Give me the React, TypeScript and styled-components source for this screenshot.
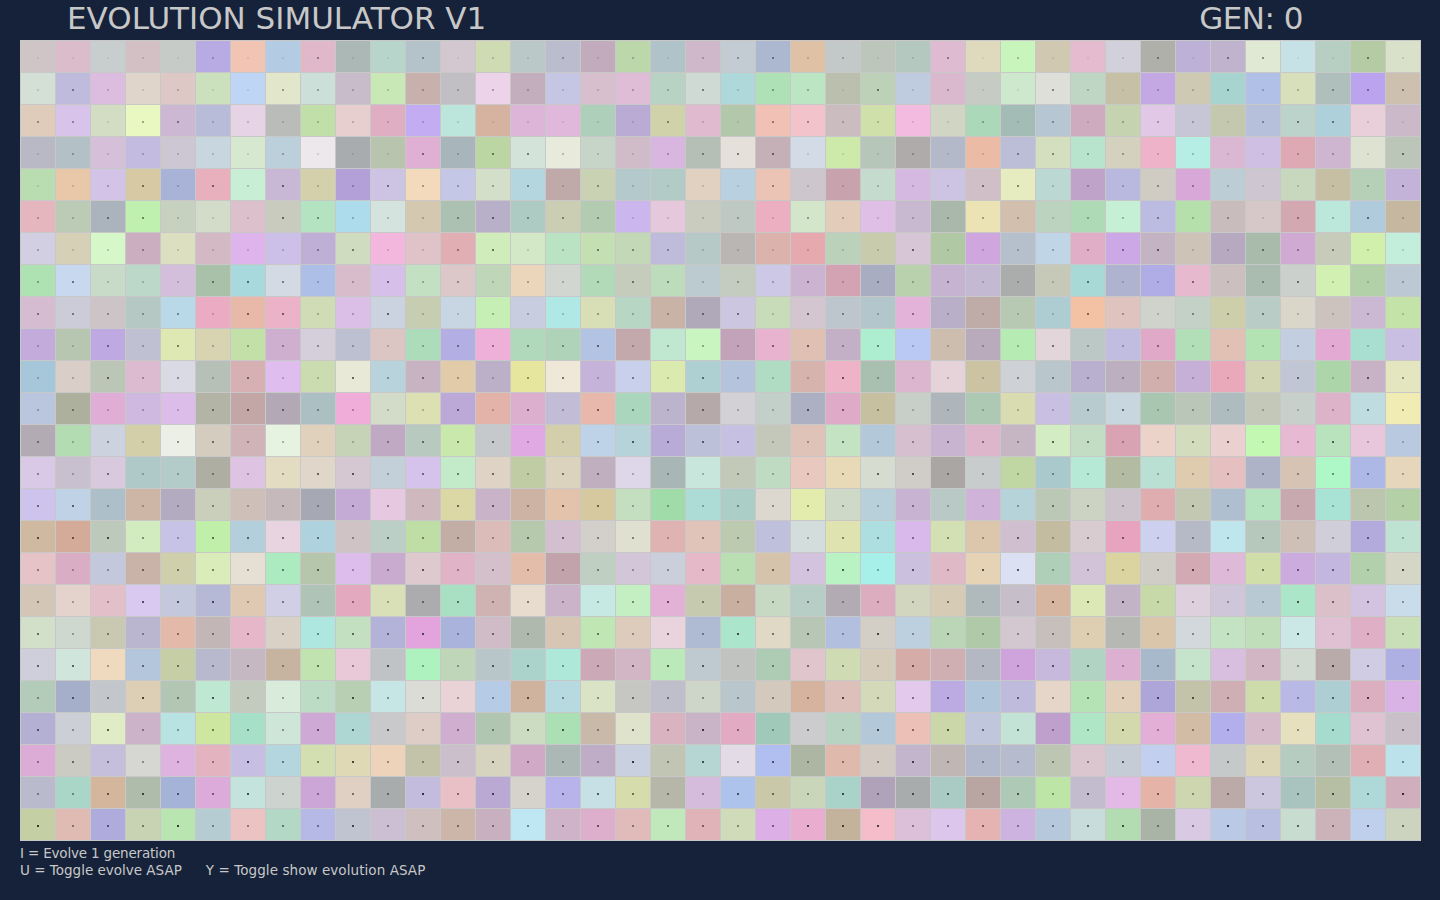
import React from "react";
import styled, { createGlobalStyle } from "styled-components";

const Global = createGlobalStyle`
  html, body { margin: 0; padding: 0; height: 100%; background: #15223a; overflow: hidden; }
`;

const ROWS = [
"cfc4c6 dbbcca c8cdcd d3c0c4 c6cbc8 b8abe3 f1c4b3 b4cbe4 e0b8ca abb8b6 b8d5cb b4c3c9 d3c8cf cfdcb3 bbc8c8 bcbccf c2abbd bcd8ab afc3c9 d0b8cb c4ccd3 abb8cf dfc1a6 c3c9c8 bcc6bb b4c8bf dfbbd1 dfd9bd c8f5bb d0c8b0 e5bbcf d1d0db aeb0a9 bdb1d7 bfb3cd dfe9d3 c6e2e6 b7cfc3 b5cba3 d9e1cb",
"d4dfd6 bfbbdc dcbde0 e0d5cb ddc8c6 cbe0bd bfd5f5 e2e6cb ccdfd8 c8bccb c8e8b6 c8b0ac c1bfc3 edd3ea c3aebd c4c6e3 d8bfcd e0bdd6 b8d3c4 cedad3 afd8db aee2b6 bce6c3 bbbfad bcd1b8 bfcce0 dab8ce c6ccc4 cde8cd dfdfda bfd6c4 c6c0a6 c3a8e3 cec9b3 a8d4d0 b0c0e6 d7dfbb aebfbc bca3f0 cec0ae",
"e0ccbb d8c3ea d3ddc4 e8f8c0 ccb8d3 b9bcd8 e6d3e6 b9bcb9 c0dfa9 e8cfcf dfaec3 c4acf3 bce6dc d5b3a0 dcb5d8 e0b8db aecfb9 b9abd3 d0d3a9 e0bbcf b3c8ab f1c1b6 f3c3cb cbbcbf d0e0ab f3bbe0 d0d6c3 abd8b8 a3bcb6 b6c6d3 cfabbf c6d3b0 e0c8e6 c6c6d6 c3c8ae b6c0db bcd3cb add0db e8cfd9 cbb8c8",
"b9b9c6 b3c0c6 d6bfd8 c4bce0 cdc6d3 c8d6e0 d6e8cf bcd0dc ece8ec a9acae b8c4ad dfb0d3 a8b6bc bbd6a3 d3e3d9 e8eadc c6d5c8 d0bbc8 d8b6e0 b6bfb6 e5e0da c6b0b8 d3dbe6 ceeaab b6c6b8 aeabaa b3b9c9 ebbba6 bbbed6 d3dfbf b8e3cc d5d1bf eeb3c8 b6eee6 dab8d3 cfbfe3 dfa9b3 cfb6d0 dde3d0 bcc6b8",
"b9dcb0 e8c8a9 d3c3e6 d6c9a3 a9b3d8 e8b0bc c8eed6 c8b8d6 d4d0ab b3a0d9 cdc3e3 f3dabc c4c8e6 d3dfc9 b3d6df bfaaa9 c9d3b3 b3c9cc b3cbc6 e0d1c1 b8d0e0 ebc4b6 cdc6cc c8a3ae c4dbcd d6b9e0 cdc3e3 d0bfc6 e6ecc0 bcd8d3 bfa3c9 b9b9e0 d1ccc3 d8a8d8 bccdd6 cec6d0 c8d8bf c6bfa3 b6d0b8 c3b3d8",
"e6b6bf bccbb6 abb3bc bff0af c6d1bf d3dcc8 dcc0cc c9cbbf b3e3c0 addcec d5e3de d5c8b0 adc1b3 b8b0c8 aecbc3 ccceb3 b3cbb0 cbb6ee e6c8dc cbccc0 bfc9c3 ebafc1 d3e6c9 e3ccb9 dfbfe6 c8b9d0 a9b8ab ebe3b3 d3bfae bcd3c0 aedbb6 c6f0d6 bcbce3 b6e0ab c8bcbc d6c8c8 d3a8b0 bce8dc b0cbdc c6b8a0",
"d3cfe3 d6d0b6 d6f8c8 cbafc0 dcdfc0 d3b9c3 dfb3ec ccbfe8 bfafd6 d0dcc0 f3b6dc dfc3c8 e0aeb3 d0ecbb d3e8c6 b9e3c3 c4e0b3 c3d8b6 bfbcdb b6c9c6 bab6b3 dcb3ac e6a9ae bcd1b9 c9cbad d6c6d6 b0c8a3 d0a6de b6bfcc c0d6e6 e0aec6 cca8e6 c3b3c3 cdc3b6 b6a9c0 a9bcac d0aad3 c6ccb9 d0f0ab c3eedb",
"aee2b3 c8d9ef c8dbc8 bcd8c8 d3bfdc a9c1a9 a8d9dc d3dae3 adbfe6 d8bccb d6bfe9 c3e0c3 dcc8c9 c0d6b8 ebd6bc d1d6d0 b3dab8 c6ccbb bcdcbc bccbd0 c4ccc0 cdc8e6 cbb3d1 d3a3b3 a9adc1 b9d1ad c6b3d1 c4b9d3 aaadab c6c8b8 a8d9d6 afb3cf b0ade6 e6b9ce cbbfbf a9bcaf ccd0cc d3f0b3 b3d1a9 bcc8d3",
"d6bcd0 ccccd9 ccc4c6 b6c8c3 b9d9e9 ebabc3 e8b9a9 ecb3c8 d0dcb6 dcbfe6 ccd3e0 c6cdb0 c8d6e3 c6efb6 c8cde0 b0e8e6 d8dfb6 b8d6c4 c9b3a6 afa9b9 ccc6e0 c8dcb9 d3c6d0 bcc6cc b3c6cc e3b3d9 b9afc9 bfaca9 b8c9b3 aecdd3 f3c1a3 dfc3bf d0d3cc c3d1c6 cccfa9 b9cdc6 dad6c9 ccc3bf cbb9d3 c3e3a9",
"c3acdc b6c6b0 bfa9e3 bfc0d1 dde8b3 d8d3b0 c3e0a9 cfafcf d5cfdb bdc0d1 dcc6c3 acdcb9 b3aee3 eeb0d8 b0d9bc aed3b9 b3c3e3 c3a8ac c0e8d0 c8f5c0 c3a3b9 e8b3cf e0c0b3 c4b0c6 aeeed0 b9c9f3 ccbdaf b9aabc b6ebb3 e3d6db bbc8c6 c0bde0 e0a9c8 b3dfb8 e0c1b3 b3e3b3 c3cfe0 e3abd3 a9dfd0 c8bfe3",
"a6c6d9 d9cec8 bcc6b6 dcbbd0 d9dae3 b6c0b6 d6b0b3 dfbdee cadcb0 e8e9d6 b8d3dc c8b3c3 e1cba9 bcafc8 e6e69f efe8d9 c6b3d9 c8d0ec dbebaf aed0d3 b6c3dc b0dcc3 d6b3ac eeb3c6 a9bfb0 dcb6cf e6d3d9 ccc3a3 ced1d6 b9c6cc b9b0d0 bcb0c0 d0afac c6b0d8 e9a9bb d3d6b3 c0c6d3 acd6a9 c8b3c6 e3e6bf",
"b9c6de aeb09e e0add6 cfb9e0 dcbce8 b3b3a6 c3a6a6 b3a9b6 acbfc3 f0add9 d3dcc8 dce0b3 bca9d8 e3b3a9 dcafcf c3bcd6 e8b8ac a9d6bc bcb3cc b6a9a9 d3d0d6 c3cfc9 adafc3 dfa9c8 c6c0a0 c8cfc9 aeb6bc aec9b3 d9dcb0 c9bfe3 b8ccd0 c8d6df a9c6b0 bac6b8 aebcc0 c3c8b8 c8d0cc dcb3c9 bfdce0 f0ecb3",
"b3abb3 b3dcb3 ccd3df d3cfa9 ecefe6 d3ccbf cfb3b6 e6f3e0 dfd1bb c6d3b6 bfa9c3 b8c9bf c9e8ab c6c9cc e0a9e3 d3cfad bfd3e8 b6d3d9 b9abd8 bcc0d9 c6c0e3 c3c8bb dfc3b9 c3e3c3 b3c8d9 d6bfcf c8b3d0 deb6cb c6b6c3 d3ecc3 c3dcc4 d9a3b3 ebd3c9 d3dcbc ebd0d0 c3f8b3 e8b9d3 b8e3bc e8c6dc b8c9e0",
"d9c9e6 c8bfcf d8c9de afc9c9 b3cbc9 aeaea3 dfc3e3 e3dcc3 e0d6c9 d6c8d3 c3d0d9 d6c3eb c3ebc9 dfd3c6 c0cca3 dcd3bf c0afbf ded6e9 a9b6b6 c8e6dc c3c9b9 bfdcc3 e9c9bf e8dab6 d6dccf d0ccc8 a9a6a3 c8cccc c0d6a3 a9c9cc b6e9d6 b3bba3 b9e0d3 dfccaf e6bfc0 afb3c8 d6c3b3 aef8c8 adb8e6 e6d6bc",
"cdc3ed c0d3e6 adc0c9 cdb6a6 b3acc0 cacfbb cfbfb9 c6b9bc a6a9b3 c3abd6 e6c9e0 cfb9bf dcd8a6 c9b3c9 ccb3a3 e3c3ab d6c9a0 c3dfbf a0dca9 addbd6 abcfc6 dcd8d0 e3ecac cfd9c8 b8d0d9 c9b3d3 b9c9c6 cfb3d8 b6d3d9 bbc8b6 ccd3c3 cdc3cc dfadb0 c3c8b3 b0bfcf b6e3bf c9a9b0 a9e3d6 bcc6ae b3d0a6",
"cfb9a0 d3ab98 bcc9bb d3ecbf c6c3e6 c0efa9 b3cfdc e8d3e0 aed3df cfc3c6 bccfc6 bfdea6 c3aea6 dcbcb9 b6c9ac d3bfcf d3d0cc e0e0d0 e0b3b3 e0c3b9 bccbb0 bfc0db d3dedc dee3b0 aedfe0 d9b9eb d3e0b3 dcc6ac cfbfcf c4bca0 d8ccd0 e8a3bf cdd0ee b6b9c6 bfe6ec b6c8bc cec0b6 d0ced9 b3abdc bfe3d3",
"e6c3c6 d9adc3 c3c8dc c9b3a9 cfcfac d9ecb9 e6dfd3 acebc0 b6c6ac dcbdec c9abd0 ddc9ce e0b3c6 d3c0cb e3bcaa c3a3ab bfd0c3 d3c6d8 cbcedb e6b9c9 b9dfb3 d6c3ac d3c3df b9f3c3 a6f0e9 ccc0df dfb9c6 e6d3b6 dbe0f3 b0cfb9 d3c3d9 dbd3a0 cfcdc6 d3a9b3 dfb9d8 d0dfa9 ccabdf c3b6df b3d0ac d6d6c6",
"d3c6b6 e3d3cc e3c0c9 d9c8f0 c3c8dc b6b9d6 dfc9b3 d0cfe6 afc3b6 e3a9bf d9dfb6 acacae a9dfc3 cfb3b3 e8dccf cbb3c9 c6e9e3 c3efc3 e3b0d6 c6cbb0 c9af9f c8d9c3 b6cec6 b3abb3 dcacbf d3d6bf d6ccb6 b0b9bc c6bfc9 d6b6a0 dce9b6 c3b3c6 c8d9a9 ded0dc cfc6d9 b8c9d3 ace6c9 dbbfc9 d3c3e0 c9dce9",
"d3e0c9 cfd8ce c8c9b0 bab6d0 e3b9a9 c3b6b6 e6b6c9 d9d0c6 aee6e0 c3e0c0 b3b3d9 e3a3dc a9b3dc cfbcc6 afb9ae d6c6b3 bfe6b3 ddccbb e9d3dc aebbd3 abe6cc e0d9c6 b8c6b6 b3bfdf d3cfc6 bcd0df bbd6b6 afc9a9 d3c8cf c6bfbc decfb3 b6b8b3 dac6ab d3d8dc c3e3c3 c0deb9 cce8e6 e0c0d3 dfafc6 c9dfb8",
"cfcfdc d0e6dc efd9bf b3c6dc c6cea6 b9b9ce c6b8c3 c6b3a0 c0e3b0 e9c9d8 bfc3c6 aef3bf c0d6b9 b9c6c9 abd3cc aee8d9 cca9b6 d3b6c6 bce9b9 bfc9d0 c0c3bf aecbb3 e0c6cc cfdcb3 d6ccbb d6aca9 d0afb3 b3b8c3 cfa3dc c6b9dc b0d3c3 dcb0d0 a9b9cc c6e3cc d9bfdf d3b6c3 d0dad0 b9abaa d0cce3 aeb0e3",
"b3cbb9 a6afc9 c3c6cb ddcfb6 b3c6b3 bfe8d3 c3cbbf d9ecdc bcdcc6 b8cfb3 c6e6e6 dcdcd6 ead3d6 b6cce6 cfb39f b6dadf dae3c6 c6c6c3 bfbfcc ced6c9 b9c6cc d3c9bc d6b39f dcc0b9 d3d9b9 e3c9ec bcabe3 b0c6da bfbbdc e6d6c9 b6e3b6 e3d0bb aea6d9 c3c3a9 cfafb3 cedcab b9b9e6 adcfd3 dbafbf d9b3e6",
"b3b0d3 ccd0d6 e0ecc6 ccb3c9 b9e3e3 cde6a0 a6e0c9 cde6d8 cfa9d6 aed6d3 c9c9cc deccc6 d0aed0 b0c6b0 cbdcc3 aae0b3 c9b9a9 dfe3cc d9b3c0 c9b3c6 e3abc3 a0c9b9 ccccce b9d3c3 b3c9d9 ecc0b6 cbd6a9 c0c6dc c3e3d6 bf9fcb aee6c6 d3d9ad e3afd6 d3bca6 b3aeec d6bccb e6e0bf a6dcce e0c3d3 c9c0c9",
"dcabd6 cbcbc3 c6bfdc d6d6d3 deb3e0 e3b3bf c6bfe3 b3d6df d3dfb0 dfd9b6 ecd3b9 c3c3a9 ccbfcc d6d3bf cfa9c6 abb8b6 bfacc6 c9d0df c0c6b3 b6d6d3 e3dce6 b0bfef adb6a3 dfb9ac d3cac3 c3b6cc c0b6b3 b3b9cc b6bcce bcc6b3 dbc6d0 c6ccd6 c3cfef efb9d0 c6c9c9 dcd6b6 b6ccc0 b3c0b8 e0afb6 bce3ec",
"b9bbcc a9d6c6 d3b69c afbcab a6b3d9 dcabd9 c3e3dc cdd3cf cba6d6 e0cfc3 a9acac c3bcdc e9c0c6 b9a9d3 d6d3cc b9b3ec c6e0e6 d6dcac b6b6a9 d6bcdc aec3ec c9c9a9 c9d6b9 a9d3c9 b0a3b9 a9acac a9cbc3 b9a6a3 aec9b6 bde6a6 c3bbce e3b9e6 e6b3a9 cdd6af bcaaa9 ccc6df a9c3bf b6bfa3 afd9d9 d0aebb",
"c4d0a3 e0bbb3 afabdc c8d3b3 b9e6b0 b6ccd3 ecc3c3 b3d9c6 b6b9e6 c0c3d0 ccbfd3 cfbfbf ccb6a9 c9b0c0 bfe6f3 cfb3c9 ddafcc e0bbb9 c0e8bb e0b3b9 d0dcb9 dcafe6 e9adcf c3b39c f5bcc9 dcbfd9 dcc6ec e6b3b3 ccb3e0 b6c9dc c9dcdc b3dcb3 a9b3a6 d9c9e3 b9c9e6 b9bfe0 c9dcd0 ccb3b9 bfd0ec ccd3bf",
];

const Page = styled.main`
  width: 1400px;
  padding: 0 20px;
  font-family: "DejaVu Sans", "Liberation Sans", sans-serif;
  color: #c8c8c8;
`;

const Header = styled.header`
  box-sizing: border-box;
  height: 40px;
  padding: 0 117px 3px 47px;
  display: flex;
  justify-content: space-between;
  align-items: center;
`;

const Heading = styled.h1<{ $spacing: number }>`
  margin: 0;
  font-size: 31px;
  font-weight: 400;
  line-height: 35px;
  white-space: nowrap;
  letter-spacing: ${(p) => p.$spacing}px;
`;

const Board = styled.section`
  width: 1400px;
  padding: 0 1px 1px 0;
  background: #c8c8c8;
  display: grid;
  grid-template-columns: repeat(40, 35px);
  grid-auto-rows: 32px;
`;

const Cell = styled.div.attrs<{ $color: string }>((p) => ({
  style: { backgroundColor: `#${p.$color}` },
}))<{ $color: string }>`
  box-sizing: border-box;
  border-top: 1px solid #c8c8c8;
  border-left: 1px solid #c8c8c8;
  padding-top: 3px;
  display: flex;
  align-items: center;
  justify-content: center;
`;

const Creature = styled.span.attrs<{ $alpha: number }>((p) => ({
  style: { opacity: p.$alpha },
}))<{ $alpha: number }>`
  width: 2px;
  height: 2px;
  background: #000;
`;

const Help = styled.footer`
  padding-top: 4px;
  font-size: 13.5px;
  line-height: 17px;
`;

const HelpRow = styled.div<{ $spacing?: number }>`
  display: flex;
  gap: 24px;
  white-space: nowrap;
  letter-spacing: ${(p) => p.$spacing ?? 0}px;
`;

const HelpItem = styled.span<{ $spacing?: number }>`
  letter-spacing: ${(p) => p.$spacing ?? 0}px;
`;

function dotAlpha(r: number, c: number): number {
  const h = Math.abs(Math.sin(r * 127.1 + c * 311.7) * 43758.5453) % 1;
  const base = 0.06 + (r / 24) * 0.32;
  return Math.min(0.85, base + h * h * 0.4);
}

export default function App() {
  return (
    <Page>
      <Global />
      <Header>
        <Heading $spacing={0}>EVOLUTION SIMULATOR V1</Heading>
        <Heading $spacing={-0.5}>GEN: 0</Heading>
      </Header>
      <Board>
        {ROWS.map((row, r) =>
          row.split(" ").map((color, c) => (
            <Cell key={`${r}-${c}`} $color={color}>
              <Creature $alpha={dotAlpha(r, c)} />
            </Cell>
          ))
        )}
      </Board>
      <Help>
        <HelpRow $spacing={-0.18}>I = Evolve 1 generation</HelpRow>
        <HelpRow>
          <HelpItem>U = Toggle evolve ASAP</HelpItem>
          <HelpItem $spacing={0.07}>Y = Toggle show evolution ASAP</HelpItem>
        </HelpRow>
      </Help>
    </Page>
  );
}
